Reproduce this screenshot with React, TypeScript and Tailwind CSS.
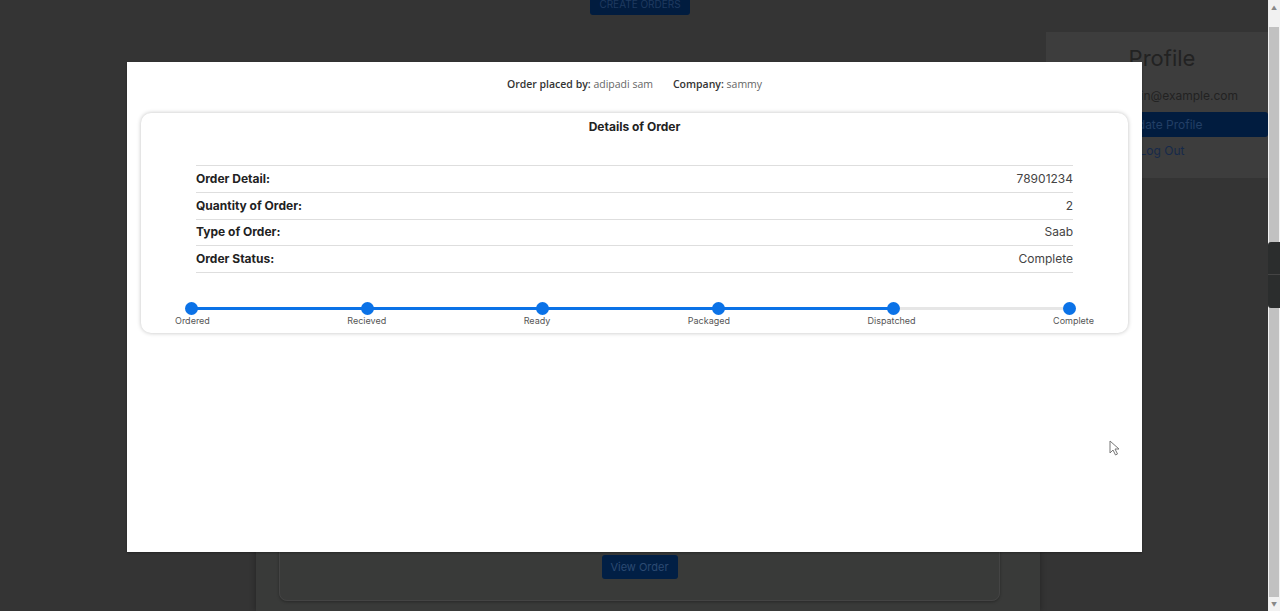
import React from "react";

const rows = [
  { label: "Order Detail:", value: "78901234" },
  { label: "Quantity of Order:", value: "2" },
  { label: "Type of Order:", value: "Saab" },
  { label: "Order Status:", value: "Complete" },
];

const steps = ["Ordered", "Recieved", "Ready", "Packaged", "Dispatched", "Complete"];

function OrderProgress() {
  return (
    <div className="mt-[29px]">
      <div className="relative ml-[44px] mr-[52px]">
        {/* track behind the dots */}
        <div className="absolute left-[6px] right-[6px] top-[5px] h-[3px] bg-[#e6e6e6]">
          <div className="h-full w-[80%] bg-[#0b72e7]" />
        </div>
        <div className="relative flex justify-between">
          {steps.map((s) => (
            <div key={s} className="h-[13px] w-[13px] rounded-full bg-[#0b72e7]" />
          ))}
        </div>
      </div>
      <div className="mx-[34px] flex justify-between">
        {steps.map((s) => (
          <span key={s} className="whitespace-nowrap text-[9px] leading-[11px] text-[#555]">{s}</span>
        ))}
      </div>
    </div>
  );
}

function OrderModal() {
  return (
    <div className="absolute left-[127px] top-[62px] h-[490px] w-[1015px] bg-white shadow-[0_1px_2px_rgba(0,0,0,0.3)] font-['Inter',sans-serif]">
      <div className="flex h-[51px] items-center justify-center gap-[20px] pb-[6px] font-['Open_Sans',sans-serif] text-[10.5px] text-[#333]">
        <span>
          <b className="font-semibold">Order placed by:</b> <span className="text-[#666]">adipadi sam</span>
        </span>
        <span>
          <b className="font-semibold">Company:</b> <span className="text-[#666]">sammy</span>
        </span>
      </div>
      <div className="mx-[14px] h-[220px] rounded-[10px] bg-white shadow-[0_0_4px_rgba(0,0,0,0.25)]">
        <div className="pt-[6px] text-center text-[12px] font-bold leading-[16px] text-[#222]">Details of Order</div>
        <div className="mt-[30px] px-[55px]">
          {rows.map((r) => (
            <div key={r.label} className="flex h-[26.75px] items-center justify-between border-t border-[#dedede] text-[12px]">
              <span className="font-bold text-[#222]">{r.label}</span>
              <span className="text-[#444]">{r.value}</span>
            </div>
          ))}
          <div className="border-t border-[#dedede]" />
        </div>
        <OrderProgress />
      </div>
      {/* mouse cursor */}
      <svg className="absolute left-[982px] top-[378px]" width="12" height="18" viewBox="0 0 12 18">
        <path d="M1 1 L1 13 L4 10 L6.5 15 L8.5 14 L6 9 L10 9 Z" fill="#fff" stroke="#777" strokeWidth="1" />
      </svg>
    </div>
  );
}

export default function App() {
  return (
    <div className="relative flex h-[611px] w-[1280px] overflow-hidden bg-[#343434] font-['Inter',sans-serif]">
      <div className="flex w-[1268px] flex-col">
        <div className="h-[32px]">
          <div className="ml-[590px] mt-[-10px] flex h-[25px] w-[100px] items-end justify-center rounded-[3px] bg-[#011c3f] pb-[3px] text-[10px] text-[#1f3a60]">
            CREATE ORDERS
          </div>
        </div>
        <div className="flex flex-1">
          <div className="w-[256px]" />
          <div className="mt-[40px] flex w-[784px] flex-col bg-[#393a39] pb-[10px] pl-[23px] pr-[40px] shadow-[0_0_6px_rgba(0,0,0,0.35)]">
            <div className="flex flex-1 flex-col items-center justify-end rounded-[8px] border border-[#444] pb-[21px] shadow-[0_1px_3px_rgba(0,0,0,0.3)]">
              <div className="flex h-[24px] w-[76px] items-center justify-center rounded-[3px] bg-[#011f45] text-[11px] text-[#2c4a72]">
                View Order
              </div>
            </div>
          </div>
          <div className="ml-[6px] flex h-[146px] w-[222px] flex-col items-center bg-[#3d3d3d] pl-[10px] pt-[12px]">
            <div className="text-[22px] leading-[28px] text-[#222]">Profile</div>
            <div className="mr-[30px] mt-[15px] self-end text-[12px] text-[#222]">admin@example.com</div>
            <div className="mt-[7px] flex h-[25px] w-[212px] items-center justify-center self-end rounded-[3px] bg-[#011c3f] text-[12px] text-[#223f66]">
              Update Profile
            </div>
            <div className="mt-[5px] text-[12px] text-[#16294a]">Log Out</div>
          </div>
        </div>
      </div>
      {/* scrollbar */}
      <div className="flex w-[12px] flex-col bg-[#f1f1f1]">
        <div className="flex h-[27px] items-start justify-center pt-[3px] text-[6px] text-[#888]">▲</div>
        <div className="mx-[1px] flex-1 bg-[#c1c1c1]" />
        <div className="flex h-[14px] items-end justify-center pb-[2px] text-[6px] text-[#888]">▼</div>
      </div>
      <div className="absolute right-0 top-[242px] flex h-[66px] w-[12px] flex-col rounded-l-[3px] bg-[#2b2d2d]">
        <div className="h-[33px] border-b border-[#444]" />
      </div>
      <OrderModal />
    </div>
  );
}
